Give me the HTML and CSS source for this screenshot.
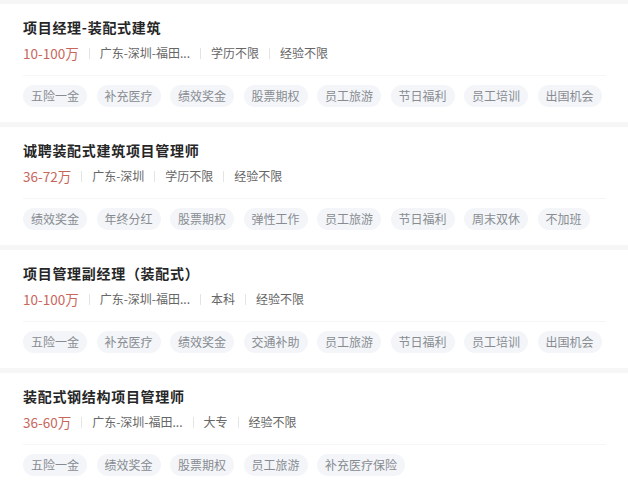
FILE: index.html
```html
<!DOCTYPE html>
<html>
<head>
  <meta charset="utf-8">
  <title>职位列表</title>
  <link rel="stylesheet" href="styles.css">
</head>
<body>
  <div class="job-list">
    <div class="job">
      <div class="job-head">
        <h2 class="job-title">项目经理-装配式建筑</h2>
        <div class="job-meta">
          <span class="salary">10-100万</span>
          <span class="sep"></span>
          <span>广东-深圳-福田...</span>
          <span class="sep"></span>
          <span>学历不限</span>
          <span class="sep"></span>
          <span>经验不限</span>
        </div>
      </div>
      <div class="tags">
        <span class="tag">五险一金</span>
        <span class="tag">补充医疗</span>
        <span class="tag">绩效奖金</span>
        <span class="tag">股票期权</span>
        <span class="tag">员工旅游</span>
        <span class="tag">节日福利</span>
        <span class="tag">员工培训</span>
        <span class="tag">出国机会</span>
      </div>
    </div>

    <div class="job">
      <div class="job-head">
        <h2 class="job-title">诚聘装配式建筑项目管理师</h2>
        <div class="job-meta">
          <span class="salary">36-72万</span>
          <span class="sep"></span>
          <span>广东-深圳</span>
          <span class="sep"></span>
          <span>学历不限</span>
          <span class="sep"></span>
          <span>经验不限</span>
        </div>
      </div>
      <div class="tags">
        <span class="tag">绩效奖金</span>
        <span class="tag">年终分红</span>
        <span class="tag">股票期权</span>
        <span class="tag">弹性工作</span>
        <span class="tag">员工旅游</span>
        <span class="tag">节日福利</span>
        <span class="tag">周末双休</span>
        <span class="tag">不加班</span>
      </div>
    </div>

    <div class="job">
      <div class="job-head">
        <h2 class="job-title">项目管理副经理（装配式）</h2>
        <div class="job-meta">
          <span class="salary">10-100万</span>
          <span class="sep"></span>
          <span>广东-深圳-福田...</span>
          <span class="sep"></span>
          <span>本科</span>
          <span class="sep"></span>
          <span>经验不限</span>
        </div>
      </div>
      <div class="tags">
        <span class="tag">五险一金</span>
        <span class="tag">补充医疗</span>
        <span class="tag">绩效奖金</span>
        <span class="tag">交通补助</span>
        <span class="tag">员工旅游</span>
        <span class="tag">节日福利</span>
        <span class="tag">员工培训</span>
        <span class="tag">出国机会</span>
      </div>
    </div>

    <div class="job">
      <div class="job-head">
        <h2 class="job-title">装配式钢结构项目管理师</h2>
        <div class="job-meta">
          <span class="salary">36-60万</span>
          <span class="sep"></span>
          <span>广东-深圳-福田...</span>
          <span class="sep"></span>
          <span>大专</span>
          <span class="sep"></span>
          <span>经验不限</span>
        </div>
      </div>
      <div class="tags">
        <span class="tag">五险一金</span>
        <span class="tag">绩效奖金</span>
        <span class="tag">股票期权</span>
        <span class="tag">员工旅游</span>
        <span class="tag">补充医疗保险</span>
      </div>
    </div>
  </div>
</body>
</html>
```

FILE: styles.css
```css
body {
  margin: 0;
  background: #f6f6f7;
  font-family: "Noto Sans CJK SC", "Noto Sans", sans-serif;
}
.job-list {
  padding-top: 4px;
}
.job {
  background: #fff;
  padding: 14px 22px 15px 23px;
  margin-bottom: 5px;
}
.job-head {
  padding-bottom: 13px;
  border-bottom: 1px solid #f5f6f8;
}
.job-title {
  margin: 0;
  font-size: 14px;
  line-height: 18px;
  font-weight: bold;
  letter-spacing: 0.7px;
  color: #262626;
}
.job-meta {
  display: flex;
  align-items: center;
  margin-top: 8px;
  font-size: 12px;
  line-height: 18px;
  color: #666;
}
.salary {
  color: #c8665c;
  font-size: 13.5px;
}
.sep {
  width: 1px;
  height: 11px;
  background: #e4e4e4;
  margin: 0 10px;
}
.tags {
  display: flex;
  gap: 9.5px;
  margin-top: 9px;
}
.tag {
  height: 22px;
  line-height: 22px;
  padding: 0 8px;
  border-radius: 11px;
  background: #f3f5f8;
  color: #888c92;
  font-size: 12px;
}
```
